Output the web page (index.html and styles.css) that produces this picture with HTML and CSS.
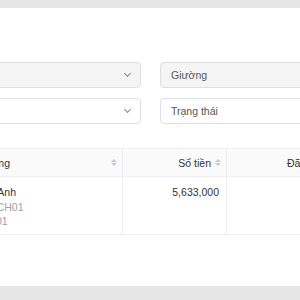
FILE: index.html
```html
<!DOCTYPE html>
<html>
<head>
    <title>Thanh toán</title>
    <link rel="stylesheet" href="styles.css">
</head>
<body>
    <div class="card">
        <div class="filters">
            <div class="select disabled"><span>Phòng</span><span class="chevron"></span></div>
            <div class="select disabled"><span>Giường</span></div>
            <div class="select"><span>Tầng</span><span class="chevron"></span></div>
            <div class="select"><span>Trạng thái</span></div>
        </div>

        <div class="table">
            <div class="row head">
                <div class="cell col-name">Khách hàng<span class="sort"></span></div>
                <div class="cell col-money">Số tiền<span class="sort"></span></div>
                <div class="cell col-paid">Đã thanh toán<span class="sort"></span></div>
            </div>
            <div class="row body">
                <div class="cell col-name">
                    <div class="name">Lê Tuấn Anh</div>
                    <div class="sub">Phòng - CH01</div>
                    <div class="sub">Giường 01</div>
                </div>
                <div class="cell col-money">5,633,000</div>
                <div class="cell col-paid">0</div>
            </div>
        </div>
    </div>
</body>
</html>
```

FILE: styles.css
```css
body {
    margin: 0;
    background-color: #e6e6e6;
    font-family: "Liberation Sans", Arial, sans-serif;
    font-size: 10.5px;
    color: #333;
    overflow: hidden;
}
.card {
    margin-top: 8px;
    margin-left: -60px;
    width: 520px;
    height: 278px;
    box-sizing: border-box;
    padding-top: 54px;
    background-color: #fff;
}
.filters {
    display: grid;
    grid-template-columns: 201px 201px;
    column-gap: 19px;
    row-gap: 10px;
}
.select {
    height: 26px;
    box-sizing: border-box;
    border: 1px solid #dedee6;
    border-radius: 4px;
    background-color: #fff;
    display: flex;
    align-items: center;
    justify-content: space-between;
    padding: 0 7px 0 10px;
    color: #555;
}
.select.disabled {
    background-color: #f5f5f6;
}
.chevron {
    width: 4px;
    height: 4px;
    border-right: 1.2px solid #888;
    border-bottom: 1.2px solid #888;
    transform: rotate(45deg);
    margin-top: -3px;
    margin-right: 3px;
}
.table {
    margin-top: 24px;
}
.row {
    display: flex;
}
.row.head {
    height: 29px;
    background-color: #fafafb;
    border-top: 1px solid #f0f0f2;
    border-bottom: 1px solid #eeeef0;
    box-sizing: border-box;
}
.row.body {
    height: 58px;
    border-bottom: 1px solid #eeeef0;
    box-sizing: border-box;
}
.cell {
    box-sizing: border-box;
    border-right: 1px solid #ededf1;
}
.head .cell {
    display: flex;
    align-items: center;
    justify-content: space-between;
    padding: 0 5px 0 14px;
}
.head .col-money,
.head .col-paid {
    justify-content: flex-end;
    gap: 4px;
}
.col-name {
    width: 183px;
}
.col-money {
    width: 104px;
    text-align: right;
}
.col-paid {
    width: 142px;
    text-align: right;
}
.body .cell {
    padding: 8px 7px 0 17px;
    line-height: 14.5px;
}
.sub {
    color: #a0a0a0;
}
.sort {
    display: flex;
    flex-direction: column;
    gap: 1px;
}
.sort::before,
.sort::after {
    content: "";
    border-left: 3px solid transparent;
    border-right: 3px solid transparent;
}
.sort::before {
    border-bottom: 3px solid #c8c8d0;
}
.sort::after {
    border-top: 3px solid #c8c8d0;
}
```
